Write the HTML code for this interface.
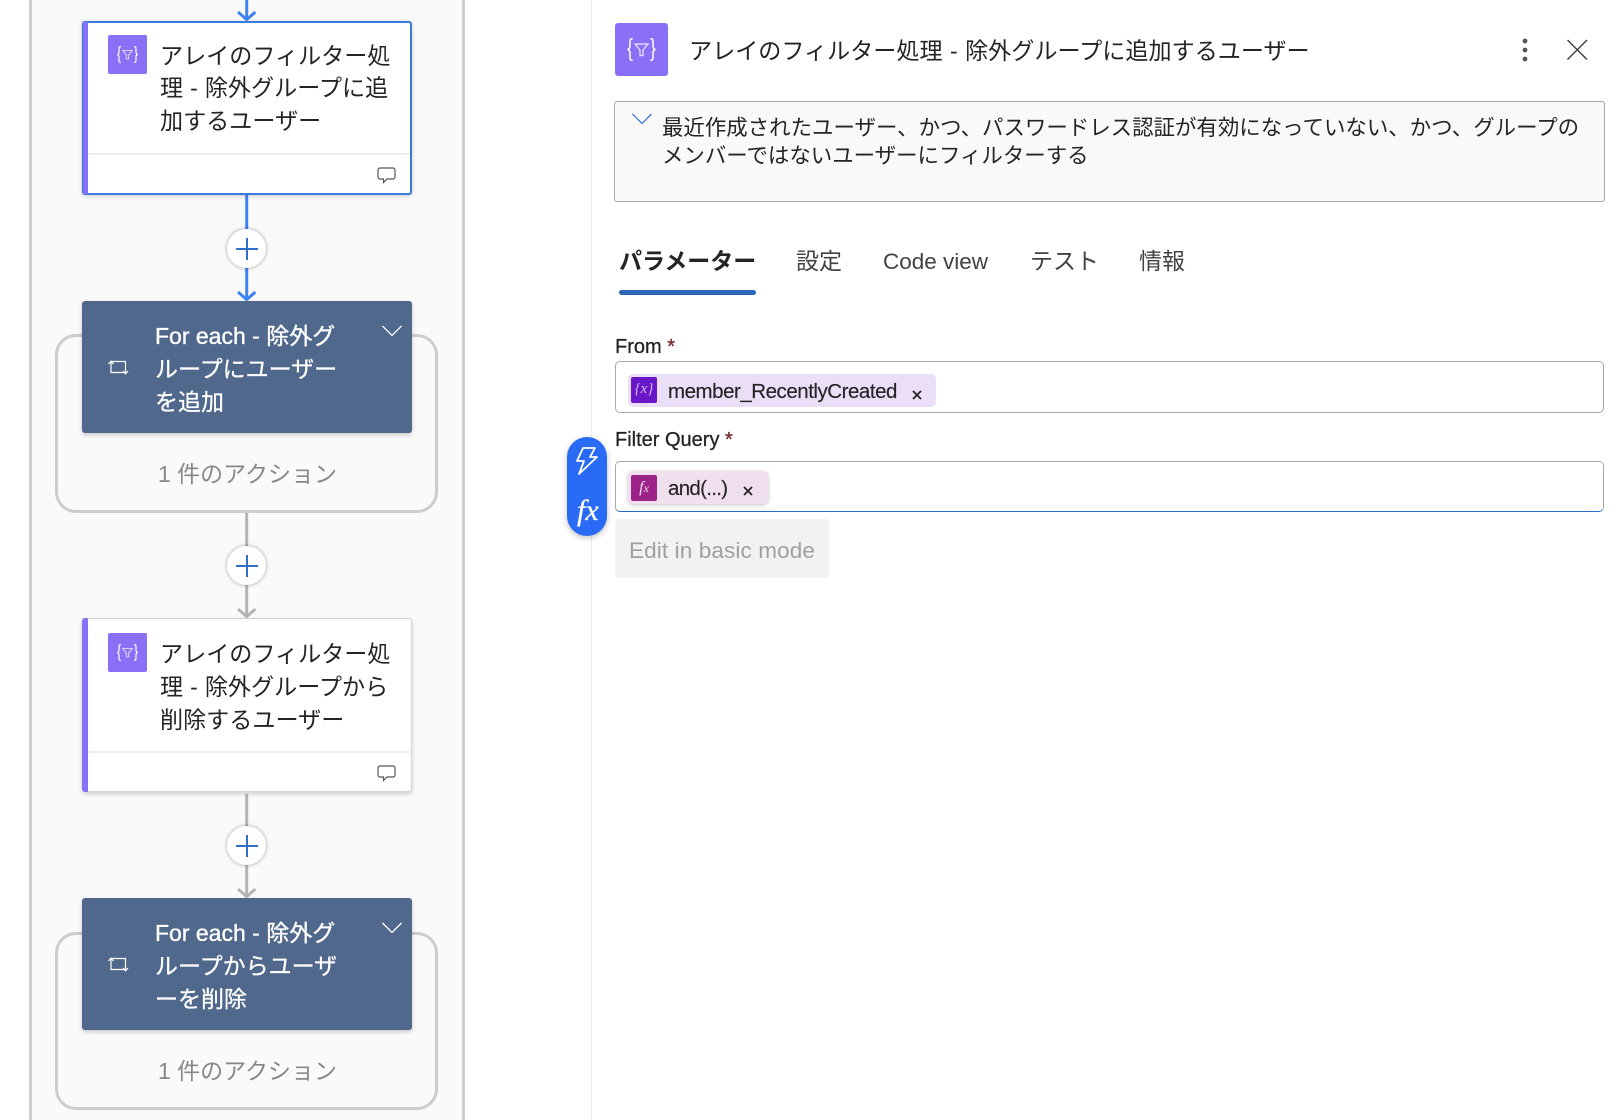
<!DOCTYPE html>
<html lang="ja"><head><meta charset="utf-8"><title>Flow</title>
<style>
html,body{margin:0;padding:0;background:#fff}
body{position:relative;width:1623px;height:1120px;overflow:hidden;font-family:"Liberation Sans","Noto Sans CJK JP",sans-serif;color:#242424}
.a{position:absolute;box-sizing:border-box}
.t{position:absolute;white-space:nowrap}
.card{position:absolute;left:82px;width:331px;background:#fff;box-sizing:border-box;border-radius:3px;box-shadow:0 2px 5px rgba(0,0,0,.18)}
.bar{position:absolute;left:0;top:0;bottom:0;width:5px;background:#8a70f6;border-radius:3px 0 0 3px}
.sep{position:absolute;left:6px;right:0;top:133px;height:2px;background:#eeeeee}
.fe{position:absolute;left:82px;width:330px;height:132px;background:#50688c;border-radius:3px;box-shadow:0 2px 5px rgba(0,0,0,.2)}
.loop{position:absolute;left:55px;width:383px;border:3px solid #cdcdcd;border-radius:21px;box-sizing:border-box}
.ln{font-size:23.100px;line-height:33px;color:#242424;word-spacing:.6px}
.wh{font-size:23px;line-height:33px;color:#fff}
.lines{position:absolute;left:0;top:0}
.plus{position:absolute;left:227px;width:39px;height:39px;border-radius:50%;background:#fff;box-shadow:0 0 3px 1px rgba(0,0,0,.22)}
</style></head><body>

<!-- canvas -->
<div class="a" style="left:29px;top:0;width:436px;height:1120px;background:#fafafa;border-left:3px solid #cdcdcd;border-right:3px solid #cdcdcd"></div>

<!-- connectors -->
<svg class="lines" width="480" height="1120" fill="none" stroke-width="3">
<g stroke="#3f83f0"><path d="M246.700 0V19M238 12l8.700 7.500 8.700-7.500"/><path d="M246.700 195V298M238 292l8.700 7.500 8.700-7.500"/></g>
<g stroke="#b4b4b4"><path d="M246.700 511V615M238 609l8.700 7.500 8.700-7.500"/><path d="M246.700 794V895M238 889l8.700 7.500 8.700-7.500"/></g>
</svg>

<!-- loops -->
<div class="loop" style="top:334px;height:179px"></div>
<div class="loop" style="top:932px;height:178px"></div>

<!-- card 1 -->
<div class="card" style="top:21px;width:330px;height:174px;border:2.500px solid #3b7bdc;box-shadow:0 1px 4px rgba(0,0,0,.2)">
  <div style="position:absolute;left:-1px;top:-1px;bottom:-1px;width:5px;background:#8a70f6"></div>
  <div class="sep" style="left:4px;top:130px"></div>
</div>
<div class="a" style="left:108px;top:35px;width:39px;height:39px;background:#8a70f6;border-radius:2px"></div>
<svg class="a" style="left:108px;top:35px" width="39" height="39" viewBox="0 0 39 39" fill="none" stroke="#fff"><path stroke-width="1.200" d="M13 11.500c-2 0-2 1-2 3v2.500c0 1.500-.6 2.300-1.800 2.500 1.200.2 1.800 1 1.800 2.500v2.500c0 2 0 3 2 3M26 11.500c2 0 2 1 2 3v2.500c0 1.500.6 2.300 1.800 2.500-1.200.2-1.800 1-1.800 2.500v2.500c0 2 0 3-2 3"/><path stroke="#d9d0fb" stroke-width="1.100" d="M14.800 15.500h9.400l-3.600 4.500v4h-2.200v-4z"/></svg>
<div class="t ln" style="left:160px;top:39.500px">アレイのフィルター処</div>
<div class="t ln" style="left:160px;top:72px">理 - 除外グループに追</div>
<div class="t ln" style="left:160px;top:105px">加するユーザー</div>
<svg class="a" style="left:377px;top:167px" width="19" height="17" viewBox="0 0 19 17" fill="#fff" stroke="#555" stroke-width="1.200"><path d="M3 1h13a2 2 0 0 1 2 2v7a2 2 0 0 1-2 2H10l-3.500 3.500V12H3a2 2 0 0 1-2-2V3a2 2 0 0 1 2-2z"/></svg>

<!-- plus 1 -->
<div class="plus" style="top:228.500px"></div>
<svg class="a" style="left:235px;top:236.500px" width="24" height="24" stroke="#2f6fc9" stroke-width="2"><path d="M1 12H23M12 1V23"/></svg>

<!-- foreach 1 -->
<div class="fe" style="top:301px"></div>
<svg class="a" style="left:107px;top:358px" width="22" height="18" viewBox="0 0 22 18" fill="none" stroke="#fff" stroke-width="1.200"><path d="M4 3.500V14.500H18.500V3.500H4M1.500 6l2.500-2.800L6.500 6M16 13l2.500 2.800L21 13"/></svg>
<div class="t wh" style="left:155px;top:320px;-webkit-text-stroke:.35px #fff">For each - 除外グ</div>
<div class="t wh" style="left:155px;top:353px;-webkit-text-stroke:.25px #fff">ループにユーザー</div>
<div class="t wh" style="left:155px;top:386px;-webkit-text-stroke:.25px #fff">を追加</div>
<svg class="a" style="left:381px;top:324px" width="22" height="14" fill="none" stroke="#fff" stroke-width="1.300"><path d="M1.500 2L11 11.500 20.500 2"/></svg>
<div class="t" style="left:158px;top:458px;font-size:23px;line-height:33px;color:#8a8886">1 件のアクション</div>

<!-- plus 2 -->
<div class="plus" style="top:545.500px"></div>
<svg class="a" style="left:235px;top:553.500px" width="24" height="24" stroke="#2f6fc9" stroke-width="2"><path d="M1 12H23M12 1V23"/></svg>

<!-- card 2 -->
<div class="card" style="top:618px;width:330px;height:174px;border:1px solid #d5d5d5">
  <div class="bar" style="left:-1px;top:-1px;bottom:-1px;width:6px"></div>
  <div class="sep" style="left:5px;top:132px"></div>
</div>
<div class="a" style="left:108px;top:633px;width:39px;height:39px;background:#8a70f6;border-radius:2px"></div>
<svg class="a" style="left:108px;top:633px" width="39" height="39" viewBox="0 0 39 39" fill="none" stroke="#fff"><path stroke-width="1.200" d="M13 11.500c-2 0-2 1-2 3v2.500c0 1.500-.6 2.300-1.800 2.500 1.200.2 1.800 1 1.800 2.500v2.500c0 2 0 3 2 3M26 11.500c2 0 2 1 2 3v2.500c0 1.500.6 2.300 1.800 2.500-1.200.2-1.800 1-1.800 2.500v2.500c0 2 0 3-2 3"/><path stroke="#d9d0fb" stroke-width="1.100" d="M14.800 15.500h9.400l-3.600 4.500v4h-2.200v-4z"/></svg>
<div class="t ln" style="left:160px;top:638px">アレイのフィルター処</div>
<div class="t ln" style="left:160px;top:671px">理 - 除外グループから</div>
<div class="t ln" style="left:160px;top:703.500px">削除するユーザー</div>
<svg class="a" style="left:377px;top:765px" width="19" height="17" viewBox="0 0 19 17" fill="#fff" stroke="#555" stroke-width="1.200"><path d="M3 1h13a2 2 0 0 1 2 2v7a2 2 0 0 1-2 2H10l-3.500 3.500V12H3a2 2 0 0 1-2-2V3a2 2 0 0 1 2-2z"/></svg>

<!-- plus 3 -->
<div class="plus" style="top:825.500px"></div>
<svg class="a" style="left:235px;top:833.500px" width="24" height="24" stroke="#2f6fc9" stroke-width="2"><path d="M1 12H23M12 1V23"/></svg>

<!-- foreach 2 -->
<div class="fe" style="top:898px"></div>
<svg class="a" style="left:107px;top:955px" width="22" height="18" viewBox="0 0 22 18" fill="none" stroke="#fff" stroke-width="1.200"><path d="M4 3.500V14.500H18.500V3.500H4M1.500 6l2.500-2.800L6.500 6M16 13l2.500 2.800L21 13"/></svg>
<div class="t wh" style="left:155px;top:917px;-webkit-text-stroke:.35px #fff">For each - 除外グ</div>
<div class="t wh" style="left:155px;top:950px;-webkit-text-stroke:.25px #fff">ループからユーザ</div>
<div class="t wh" style="left:155px;top:983px;-webkit-text-stroke:.25px #fff">ーを削除</div>
<svg class="a" style="left:381px;top:921px" width="22" height="14" fill="none" stroke="#fff" stroke-width="1.300"><path d="M1.500 2L11 11.500 20.500 2"/></svg>
<div class="t" style="left:158px;top:1055px;font-size:23px;line-height:33px;color:#8a8886">1 件のアクション</div>

<!-- right panel -->
<div class="a" style="left:591px;top:0;width:1px;height:1120px;background:#edebe9"></div>
<div class="a" style="left:615px;top:23px;width:53px;height:53px;background:#8a70f6;border-radius:3px"></div>
<svg class="a" style="left:615px;top:23px" width="53" height="53" viewBox="0 0 39 39" fill="none" stroke="#fff"><path stroke-width="1.100" d="M13 11.500c-2 0-2 1-2 3v2.500c0 1.500-.6 2.300-1.800 2.500 1.200.2 1.800 1 1.800 2.500v2.500c0 2 0 3 2 3M26 11.500c2 0 2 1 2 3v2.500c0 1.500.6 2.300 1.800 2.500-1.200.2-1.800 1-1.800 2.500v2.500c0 2 0 3-2 3"/><path stroke="#e4defc" stroke-width="1" d="M14.800 15.500h9.400l-3.600 4.500v4h-2.200v-4z"/></svg>
<div class="t" style="left:689px;top:34.500px;font-size:23.100px;line-height:33px;word-spacing:1px">アレイのフィルター処理 - 除外グループに追加するユーザー</div>
<svg class="a" style="left:1520px;top:36px" width="20" height="28" fill="#555"><circle cx="5" cy="5" r="2.400"/><circle cx="5" cy="14" r="2.400"/><circle cx="5" cy="23" r="2.400"/></svg>
<svg class="a" style="left:1565px;top:38px" width="24" height="24" stroke="#444" stroke-width="1.500"><path d="M2.500 2L22 21.500M22 2L2.500 21.500"/></svg>

<div class="a" style="left:614px;top:101px;width:991px;height:101px;background:#faf9f8;border:1px solid #a8a8a8;border-radius:3px"></div>
<svg class="a" style="left:631px;top:112px" width="22" height="14" fill="none" stroke="#3b7bdc" stroke-width="1.300"><path d="M1.500 2L11 11.500 20.500 2"/></svg>
<div class="t" style="left:662px;top:113px;font-size:21.440px;line-height:30px">最近作成されたユーザー、かつ、パスワードレス認証が有効になっていない、かつ、グループの</div>
<div class="t" style="left:662px;top:141px;font-size:21.440px;line-height:30px">メンバーではないユーザーにフィルターする</div>

<div class="t" style="left:619px;top:245px;font-size:23px;line-height:33px;font-weight:700">パラメーター</div>
<div class="a" style="left:619px;top:290px;width:137px;height:5px;background:#2b68b8;border-radius:3px"></div>
<div class="t" style="left:796px;top:245px;font-size:23px;line-height:33px;color:#424242">設定</div>
<div class="t" style="left:883px;top:245px;font-size:22.500px;line-height:33px;color:#424242">Code view</div>
<div class="t" style="left:1030px;top:245px;font-size:23px;line-height:33px;color:#424242">テスト</div>
<div class="t" style="left:1139px;top:245px;font-size:23px;line-height:33px;color:#424242">情報</div>

<div class="t" style="left:615px;top:332px;font-size:20px;line-height:30px;-webkit-text-stroke:.3px #242424">From <span style="color:#a4262c">*</span></div>
<div class="a" style="left:615px;top:361px;width:989px;height:52px;background:#fff;border:1px solid #a8a8a8;border-radius:5px"></div>
<div class="a" style="left:628px;top:374px;width:308px;height:33px;background:#ebdff7;border-radius:5px"></div>
<div class="a" style="left:631px;top:377px;width:26px;height:26px;background:#6a17c9;border-radius:2px"></div>
<div class="t" style="left:631px;top:377px;width:26px;height:26px;font:italic 15px/25px 'Liberation Serif',serif;color:#d2b8f0;text-align:center">{x}</div>
<div class="t" style="left:668px;top:377px;font-size:20.500px;line-height:30px;letter-spacing:-.47px;-webkit-text-stroke:.15px #242424">member_RecentlyCreated</div>
<svg class="a" style="left:911px;top:389px" width="12" height="12" stroke="#242424" stroke-width="1.800"><path d="M2 2L10 10M10 2L2 10"/></svg>

<div class="t" style="left:615px;top:425px;font-size:20px;line-height:30px;-webkit-text-stroke:.3px #242424">Filter Query <span style="color:#a4262c">*</span></div>
<div class="a" style="left:615px;top:461px;width:989px;height:51px;background:#fff;border:1px solid #a8a8a8;border-bottom:1.500px solid #2b6cc4;border-radius:5px"></div>
<div class="a" style="left:628px;top:471px;width:140px;height:33px;background:#f0e0ee;border-radius:5px;box-shadow:0 1px 4px rgba(0,0,0,.25)"></div>
<div class="a" style="left:631px;top:475px;width:26px;height:26px;background:#9c2188;border-radius:2px"></div>
<div class="t" style="left:631px;top:475px;width:26px;height:26px;font:italic 16px/25px 'Liberation Serif',serif;color:#f6dff2;text-align:center">f<span style="font-size:12px">x</span></div>
<div class="t" style="left:668px;top:474px;font-size:20.500px;line-height:30px;letter-spacing:-.7px;-webkit-text-stroke:.15px #242424">and(...)</div>
<svg class="a" style="left:742px;top:485px" width="12" height="12" stroke="#242424" stroke-width="1.800"><path d="M2 2L10 10M10 2L2 10"/></svg>

<div class="a" style="left:615px;top:519px;width:214px;height:59px;background:#f3f2f1;border-radius:3px"></div>
<div class="t" style="left:629px;top:534px;font-size:22.500px;line-height:33px;color:#a19f9d;letter-spacing:.12px">Edit in basic mode</div>

<!-- pill -->
<div class="a" style="left:567px;top:437px;width:40px;height:99px;background:#2a6bf5;border-radius:20px;box-shadow:0 2px 6px rgba(0,0,0,.25)"></div>
<svg class="a" style="left:574px;top:446px" width="26" height="30" viewBox="0 0 26 30" fill="none" stroke="#fff" stroke-width="1.800" stroke-linejoin="round"><path d="M9 2h12l-5 9h7L5 28l5-13H3z"/></svg>
<div class="t" style="left:577px;top:494px;font:italic 30px/34px 'Liberation Serif',serif;color:#fff;-webkit-text-stroke:.3px #fff">fx</div>

</body></html>
